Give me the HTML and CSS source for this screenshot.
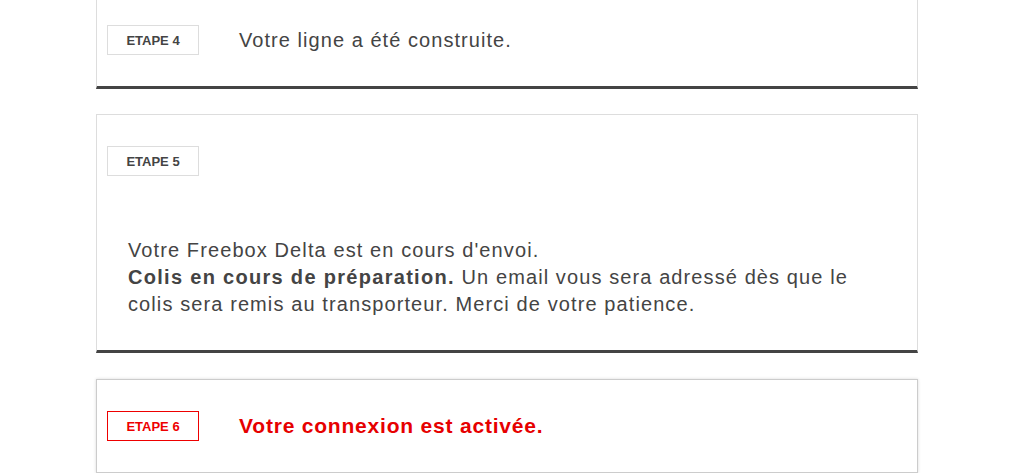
FILE: index.html
```html
<!DOCTYPE html>
<html lang="fr">
<head>
  <meta charset="UTF-8" />
  <title>Suivi de commande</title>
  <meta name="viewport" content="width=device-width, initial-scale=1.0" />
  <link rel="stylesheet" href="styles.css">
</head>
<body>

  <div class="steps">

    <!-- Etape 4 -->
    <div class="step done">
      <div class="step-head">
        <span class="badge">ETAPE 4</span>
        <span class="step-title">Votre ligne a été construite.</span>
      </div>
    </div>

    <!-- Etape 5 -->
    <div class="step done">
      <div class="step-head">
        <span class="badge">ETAPE 5</span>
      </div>
      <p class="step-text">
        Votre Freebox Delta est en cours d'envoi.<br>
        <strong>Colis en cours de préparation.</strong> Un email vous sera adressé dès que le colis sera remis au transporteur. Merci de votre patience.
      </p>
    </div>

    <!-- Etape 6 -->
    <div class="step active">
      <div class="step-head">
        <span class="badge">ETAPE 6</span>
        <span class="step-title">Votre connexion est activée.</span>
      </div>
    </div>

  </div>

</body>
</html>
```

FILE: styles.css
```css
body {
  margin: 0;
  font-family: 'Liberation Sans', Arial, Helvetica, sans-serif;
  background: #fff;
  color: #444;
}

.steps {
  display: flex;
  flex-direction: column;
  gap: 25px;
  width: 822px;
  margin: -7px 0 0 96px;
}

.step {
  background: #fff;
  border: 1px solid #ddd;
  border-bottom: 3px solid #444;
  padding: 31px 10px;
}

.step-head {
  display: flex;
  align-items: center;
  gap: 40px;
}

.badge {
  display: flex;
  align-items: center;
  justify-content: center;
  width: 90px;
  height: 28px;
  border: 1px solid #ddd;
  font-size: 13px;
  font-weight: bold;
  color: #444;
}

.step-title {
  font-size: 20px;
  letter-spacing: 1.05px;
  color: #444;
}

.step-text {
  margin: 61px 26px 1px 21px;
  font-size: 20px;
  line-height: 27px;
  letter-spacing: 1.1px;
  color: #444;
}

.step-text strong {
  letter-spacing: 1.3px;
}

/* etape en cours */
.step.active {
  margin-top: 1px;
  border: 1px solid #ccc;
  box-shadow: 0 0 3px rgba(0,0,0,0.15);
}

.step.active .badge {
  border-color: #e00;
  color: #e00;
}

.step.active .step-title {
  font-size: 21px;
  font-weight: bold;
  letter-spacing: 0.8px;
  color: #e60000;
}
```
